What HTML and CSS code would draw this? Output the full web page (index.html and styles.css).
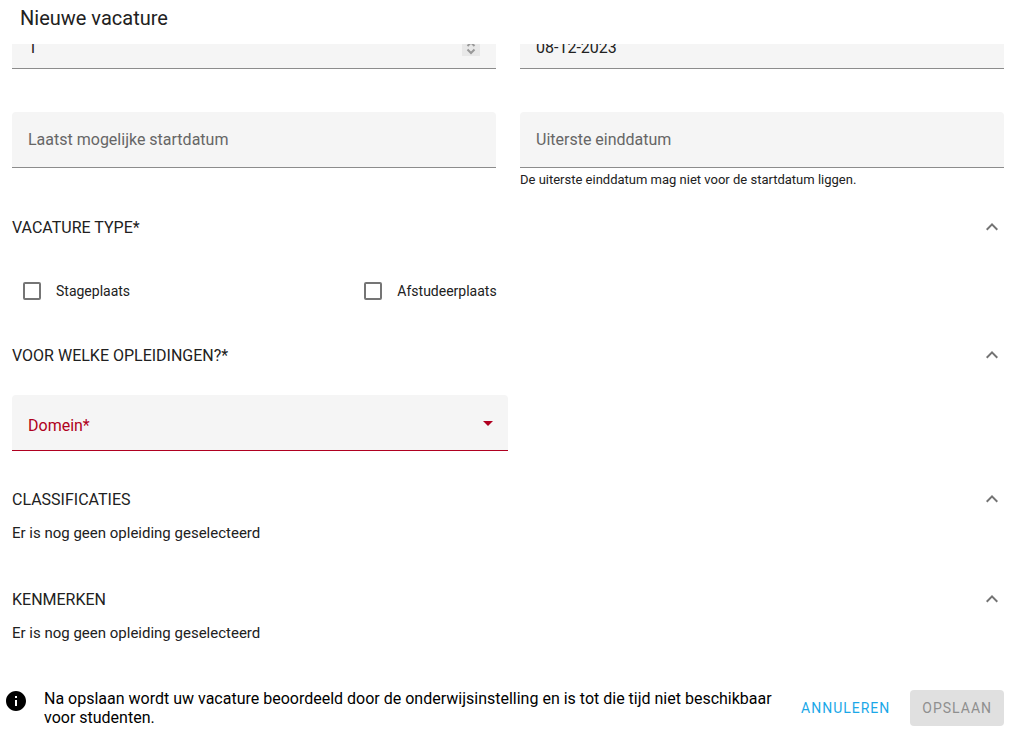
FILE: index.html
```html
<!DOCTYPE html>
<html lang="nl">
<head>
    <meta charset="UTF-8">
    <meta name="viewport" content="width=device-width, initial-scale=1.0">
    <title>Nieuwe vacature</title>
    <link rel="stylesheet" href="styles.css">
</head>
<body>
    <form class="dialog">
        <header class="dialog-header">
            <h1>Nieuwe vacature</h1>
        </header>

        <main class="dialog-content">
            <div class="field-row">
                <div class="field filled">
                    <input type="text" inputmode="numeric" value="1" aria-label="Aantal plaatsen">
                    <span class="spinner">
                        <svg width="18" height="16" viewBox="0 0 18 16">
                            <path d="M5.5 6L9 2.5L12.5 6M5.5 9.5L9 13L12.5 9.5"/>
                        </svg>
                    </span>
                </div>
                <div class="field filled">
                    <input type="text" value="08-12-2023" aria-label="Startdatum">
                </div>
            </div>

            <div class="field-row dates">
                <div class="field">
                    <input type="text" placeholder="Laatst mogelijke startdatum" aria-label="Laatst mogelijke startdatum">
                </div>
                <div>
                    <div class="field">
                        <input type="text" placeholder="Uiterste einddatum" aria-label="Uiterste einddatum" aria-describedby="end-hint">
                    </div>
                    <p class="hint" id="end-hint">De uiterste einddatum mag niet voor de startdatum liggen.</p>
                </div>
            </div>

            <section>
                <h2>
                    <button type="button" class="section-toggle" aria-expanded="true">
                        VACATURE TYPE*
                        <svg class="icon" viewBox="0 0 24 24"><path d="M12 8l-6 6 1.41 1.41L12 10.83l4.59 4.58L18 14z"/></svg>
                    </button>
                </h2>
                <div class="type-options">
                    <label class="option"><input type="checkbox">Stageplaats</label>
                    <label class="option"><input type="checkbox">Afstudeerplaats</label>
                </div>
            </section>

            <section>
                <h2>
                    <button type="button" class="section-toggle" aria-expanded="true">
                        VOOR WELKE OPLEIDINGEN?*
                        <svg class="icon" viewBox="0 0 24 24"><path d="M12 8l-6 6 1.41 1.41L12 10.83l4.59 4.58L18 14z"/></svg>
                    </button>
                </h2>
                <div class="domain">
                    <div class="field invalid">
                        <select aria-label="Domein">
                            <option>Domein*</option>
                        </select>
                        <svg class="icon arrow" viewBox="0 0 24 24"><path d="M7 10l5 5 5-5z"/></svg>
                    </div>
                </div>
            </section>

            <section>
                <h2>
                    <button type="button" class="section-toggle" aria-expanded="true">
                        CLASSIFICATIES
                        <svg class="icon" viewBox="0 0 24 24"><path d="M12 8l-6 6 1.41 1.41L12 10.83l4.59 4.58L18 14z"/></svg>
                    </button>
                </h2>
                <p class="empty">Er is nog geen opleiding geselecteerd</p>
            </section>

            <section>
                <h2>
                    <button type="button" class="section-toggle" aria-expanded="true">
                        KENMERKEN
                        <svg class="icon" viewBox="0 0 24 24"><path d="M12 8l-6 6 1.41 1.41L12 10.83l4.59 4.58L18 14z"/></svg>
                    </button>
                </h2>
                <p class="empty">Er is nog geen opleiding geselecteerd</p>
            </section>
        </main>

        <footer class="dialog-footer">
            <svg class="icon info" viewBox="0 0 24 24"><path d="M12 2C6.48 2 2 6.48 2 12s4.48 10 10 10 10-4.48 10-10S17.52 2 12 2zm1 15h-2v-6h2v6zm0-8h-2V7h2v2z"/></svg>
            <p class="notice">Na opslaan wordt uw vacature beoordeeld door de onderwijsinstelling en is tot die tijd niet beschikbaar voor studenten.</p>
            <div class="actions">
                <button type="button" class="btn">ANNULEREN</button>
                <button type="submit" class="btn btn-save" disabled>OPSLAAN</button>
            </div>
        </footer>
    </form>
</body>
</html>
```
FILE: styles.css
```css
* {
    box-sizing: border-box;
}

body {
    margin: 0;
    font-family: Roboto, sans-serif;
    font-size: 14px;
    color: #212121;
    background-color: #fff;
}

h1,
h2,
p {
    margin: 0;
    font-weight: 400;
}

input,
select,
button {
    font-family: inherit;
    color: inherit;
}

.dialog {
    display: flex;
    flex-direction: column;
    height: 100vh;
}

.dialog-header {
    padding: 2px 20px 10px;
}

.dialog-header h1 {
    font-size: 20px;
    line-height: 32px;
}

/* The form is scrolled to its end, the first row runs under the header */
.dialog-content {
    flex: 1;
    min-height: 0;
    display: flex;
    flex-direction: column;
    justify-content: flex-end;
    overflow: hidden;
    padding: 0 10px 0 12px;
}

.dialog-content > * {
    flex-shrink: 0;
}

.field-row {
    display: grid;
    grid-template-columns: 1fr 1fr;
    align-items: start;
    gap: 24px;
    margin-bottom: 43px;
}

.field-row.dates {
    margin-bottom: 14px;
}

.field {
    display: flex;
    align-items: center;
    height: 56px;
    padding: 0 16px;
    background-color: #f5f5f5;
    border-bottom: 1px solid #8c8c8c;
    border-radius: 4px 4px 0 0;
}

.field input,
.field select {
    flex: 1;
    min-width: 0;
    height: 24px;
    padding: 0;
    border: none;
    outline: none;
    background: none;
    font-size: 16px;
}

.field input::placeholder {
    color: #666;
    opacity: 1;
}

.filled {
    padding-top: 14px;
}

.spinner {
    display: flex;
    background-color: #e8e8e8;
}

.spinner path {
    fill: none;
    stroke: #999;
    stroke-width: 2;
}

.hint {
    padding-top: 4px;
    font-size: 13px;
    line-height: 16px;
}

.section-toggle {
    display: flex;
    align-items: center;
    justify-content: space-between;
    width: 100%;
    height: 48px;
    padding: 2px 0 0;
    border: none;
    background: none;
    font-size: 16px;
    cursor: pointer;
}

.icon {
    width: 24px;
    height: 24px;
    flex-shrink: 0;
    fill: #737373;
}

.type-options {
    display: grid;
    grid-template-columns: repeat(3, 1fr);
    gap: 32px;
    padding: 21px 0 19px;
}

.option {
    display: flex;
    align-items: center;
    gap: 15px;
    height: 40px;
    padding-left: 11px;
}

.option input {
    appearance: none;
    width: 18px;
    height: 18px;
    margin: 0;
    border: 2px solid #757575;
    border-radius: 2px;
}

.option input:checked {
    background-color: #757575;
}

.domain {
    width: 50%;
    padding: 17px 0 23px;
}

.invalid {
    padding-right: 8px;
    color: #b00020;
    border-bottom-color: #b00020;
}

.field select {
    appearance: none;
    height: 32px;
    padding-top: 6px;
}

.arrow {
    fill: #b00020;
    pointer-events: none;
}

.empty {
    padding-bottom: 30px;
    font-size: 15px;
    line-height: 22px;
}

.dialog-footer {
    display: flex;
    align-items: flex-start;
    padding: 15px 10px 6px 4px;
    color: #000;
}

.info {
    fill: #000;
}

.notice {
    flex: 1;
    padding: 0 12px 0 16px;
    font-size: 16px;
    line-height: 19px;
}

.actions {
    display: flex;
    gap: 8px;
    padding-top: 1px;
}

.btn {
    height: 36px;
    padding: 0 12px;
    border: none;
    border-radius: 4px;
    background: none;
    color: #1ba8e8;
    font-size: 14px;
    letter-spacing: 1px;
    cursor: pointer;
}

.btn-save {
    background-color: #e0e0e0;
    color: #8f8f8f;
    cursor: default;
}
```
